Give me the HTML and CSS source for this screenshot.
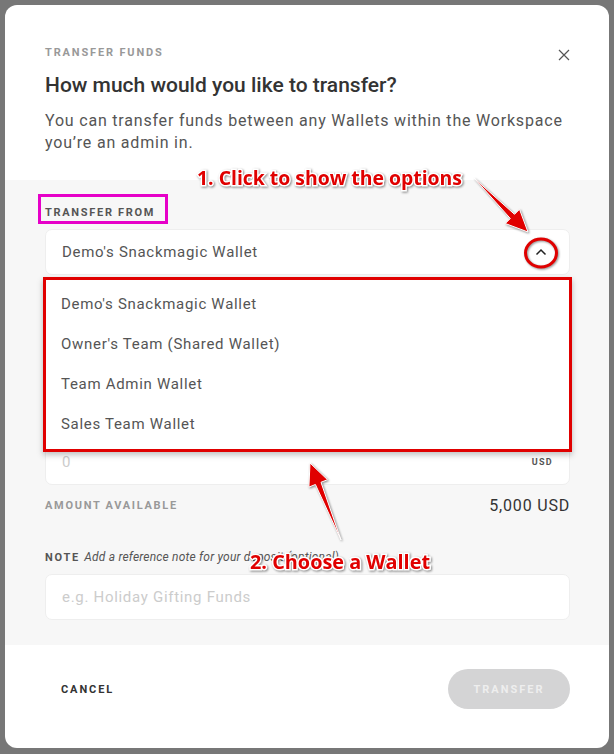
FILE: index.html
```html
<!DOCTYPE html>
<html lang="en">
<head>
    <meta charset="UTF-8">
    <title>Transfer Funds</title>
    <link rel="stylesheet" href="styles.css">
</head>
<body>
    <div class="modal">
        <div class="modal-header">
            <div class="header-top">
                <span class="eyebrow">Transfer Funds</span>
                <button class="close" aria-label="Close">
                    <svg width="12" height="12" viewBox="0 0 12 12"><path d="M1 1L11 11M11 1L1 11" stroke="#555" stroke-width="1.2" fill="none"/></svg>
                </button>
            </div>
            <h2>How much would you like to transfer?</h2>
            <p class="intro">You can transfer funds between any Wallets within the Workspace you&rsquo;re an admin in.</p>
        </div>

        <div class="modal-body">
            <div class="field">
                <label class="field-label"><span class="highlight">Transfer From</span></label>
                <div class="select">
                    <div class="select-box">
                        <span>Demo's Snackmagic Wallet</span>
                        <svg width="12" height="8" viewBox="0 0 12 8"><path d="M1.5 6.5L6 2L10.5 6.5" stroke="#222" stroke-width="1.5" fill="none"/></svg>
                    </div>
                    <!-- open dropdown, covers the fields below -->
                    <ul class="select-menu">
                        <li>Demo's Snackmagic Wallet</li>
                        <li>Owner's Team (Shared Wallet)</li>
                        <li>Team Admin Wallet</li>
                        <li>Sales Team Wallet</li>
                    </ul>
                </div>
            </div>

            <!-- hidden behind the open dropdown -->
            <div class="field">
                <div class="field-label"></div>
                <div class="select-box"></div>
            </div>

            <div class="field">
                <div class="field-label"></div>
                <div class="input-box">
                    <span class="placeholder">0</span>
                    <span class="unit">USD</span>
                </div>
                <div class="available">
                    <span class="field-label muted">Amount Available</span>
                    <span class="available-value">5,000 USD</span>
                </div>
            </div>

            <div class="field note-field">
                <label class="field-label note-label">Note <em>Add a reference note for your deposit (optional)</em></label>
                <div class="input-box">
                    <span class="placeholder">e.g. Holiday Gifting Funds</span>
                </div>
            </div>
        </div>

        <div class="modal-footer">
            <button class="btn-cancel">Cancel</button>
            <button class="btn-transfer" disabled>Transfer</button>
        </div>
    </div>

    <!-- annotation layer -->
    <svg class="annotations" width="614" height="754" viewBox="0 0 614 754">
        <g class="callout">
            <text x="197" y="185" textLength="265" lengthAdjust="spacingAndGlyphs">1. Click to show the options</text>
            <polygon points="474,178 514.5,214.3 519.5,209.3 528,232 505.3,223.5 510.3,218.5"/>
            <ellipse cx="541" cy="253" rx="15.5" ry="14" fill="none" stroke="#e00000" stroke-width="3"/>
            <polygon points="341,540 321,482.3 327.5,479.7 310,463 308.9,487.1 315.4,484.5"/>
            <text x="250" y="569" textLength="180" lengthAdjust="spacingAndGlyphs">2. Choose a Wallet</text>
        </g>
    </svg>
</body>
</html>
```

FILE: styles.css
```css
* {
    box-sizing: border-box;
}
body {
    margin: 0;
    background-color: #777;
    font-family: Roboto, "Liberation Sans", sans-serif;
    color: #333;
}
.modal {
    position: relative;
    margin: 5px;
    width: 604px;
    height: 743px;
    background-color: #fff;
    border-radius: 12px;
    overflow: hidden;
    display: flex;
    flex-direction: column;
}
.modal-header {
    padding: 41px 39px 26px 40px;
}
.header-top {
    display: flex;
    justify-content: space-between;
    align-items: center;
    height: 13px;
}
.eyebrow {
    font-size: 11px;
    font-weight: 700;
    letter-spacing: 1.85px;
    text-transform: uppercase;
    color: #999;
}
.close {
    background: none;
    border: none;
    padding: 0;
    margin-top: 4px;
    cursor: pointer;
    display: flex;
}
.modal-header h2 {
    margin: 13px 0 0;
    font-size: 21px;
    line-height: 26px;
    font-weight: 500;
    color: #333;
}
.intro {
    margin: 12px 0 0;
    font-size: 16px;
    line-height: 22px;
    letter-spacing: 0.8px;
    color: #555;
}
.modal-body {
    flex: 1;
    background-color: #f7f7f7;
    padding: 26px 39px 25px 40px;
}
.field + .field {
    margin-top: 36px;
}
.field + .note-field {
    margin-top: 35px;
}
.field-label {
    display: block;
    min-height: 13px;
    font-size: 11px;
    font-weight: 700;
    letter-spacing: 1.7px;
    text-transform: uppercase;
    color: #555;
    margin-bottom: 10px;
}
.highlight {
    display: inline-block;
    margin: -12px 0 -5px -7px;
    padding: 9px 10px 2px 4px;
    border: 3px solid #e600c8;
}
.select {
    position: relative;
}
.select-box,
.input-box {
    height: 46px;
    background-color: #fff;
    border: 1px solid #eee;
    border-radius: 7px;
    padding: 0 16px;
    display: flex;
    align-items: center;
    justify-content: space-between;
    font-size: 15px;
    letter-spacing: 0.7px;
    color: #555;
}
.select-box svg {
    margin-right: 6px;
}
.select-menu {
    position: absolute;
    z-index: 2;
    left: -2px;
    right: -2px;
    top: calc(100% + 2px);
    margin: 0;
    padding: 4px 0 5px;
    list-style: none;
    background-color: #fff;
    border: 3px solid #e00000;
    box-shadow: 0 3px 6px rgba(0, 0, 0, 0.25);
}
.select-menu li {
    height: 40px;
    line-height: 40px;
    padding-left: 15px;
    font-size: 15px;
    letter-spacing: 0.7px;
    color: #555;
}
.placeholder {
    color: #ccc;
}
.unit {
    font-size: 9px;
    font-weight: 700;
    letter-spacing: 1.3px;
    color: #555;
}
.available {
    display: flex;
    justify-content: space-between;
    align-items: center;
    margin-top: 11px;
}
.available .field-label {
    margin: 0;
}
.muted {
    color: #999;
}
.available-value {
    font-size: 16px;
    letter-spacing: 0.8px;
    color: #333;
}
.note-label em {
    font-weight: 400;
    letter-spacing: 0.2px;
    text-transform: none;
    font-size: 12px;
}
.modal-footer {
    padding: 24px 39px 39px 40px;
    display: flex;
    justify-content: space-between;
    align-items: center;
}
.btn-cancel {
    background: none;
    border: none;
    padding: 0 0 0 16px;
    font-family: inherit;
    font-size: 11px;
    font-weight: 700;
    letter-spacing: 1.9px;
    text-transform: uppercase;
    color: #333;
    cursor: pointer;
}
.btn-transfer {
    width: 122px;
    height: 40px;
    border: none;
    border-radius: 20px;
    background-color: #d4d4d5;
    font-family: inherit;
    font-size: 11px;
    font-weight: 700;
    letter-spacing: 2px;
    text-transform: uppercase;
    color: #eee;
}
.annotations {
    position: absolute;
    top: 0;
    left: 0;
    pointer-events: none;
}
.callout {
    fill: #e00000;
    filter: drop-shadow(1px 1px 1px rgba(0, 0, 0, 0.45));
}
.callout text {
    font-family: "Open Sans", sans-serif;
    font-weight: 700;
    font-size: 20px;
    stroke: #fff;
    stroke-width: 3px;
    paint-order: stroke;
}
.callout polygon {
    stroke: #fff;
    stroke-width: 1px;
}
```
